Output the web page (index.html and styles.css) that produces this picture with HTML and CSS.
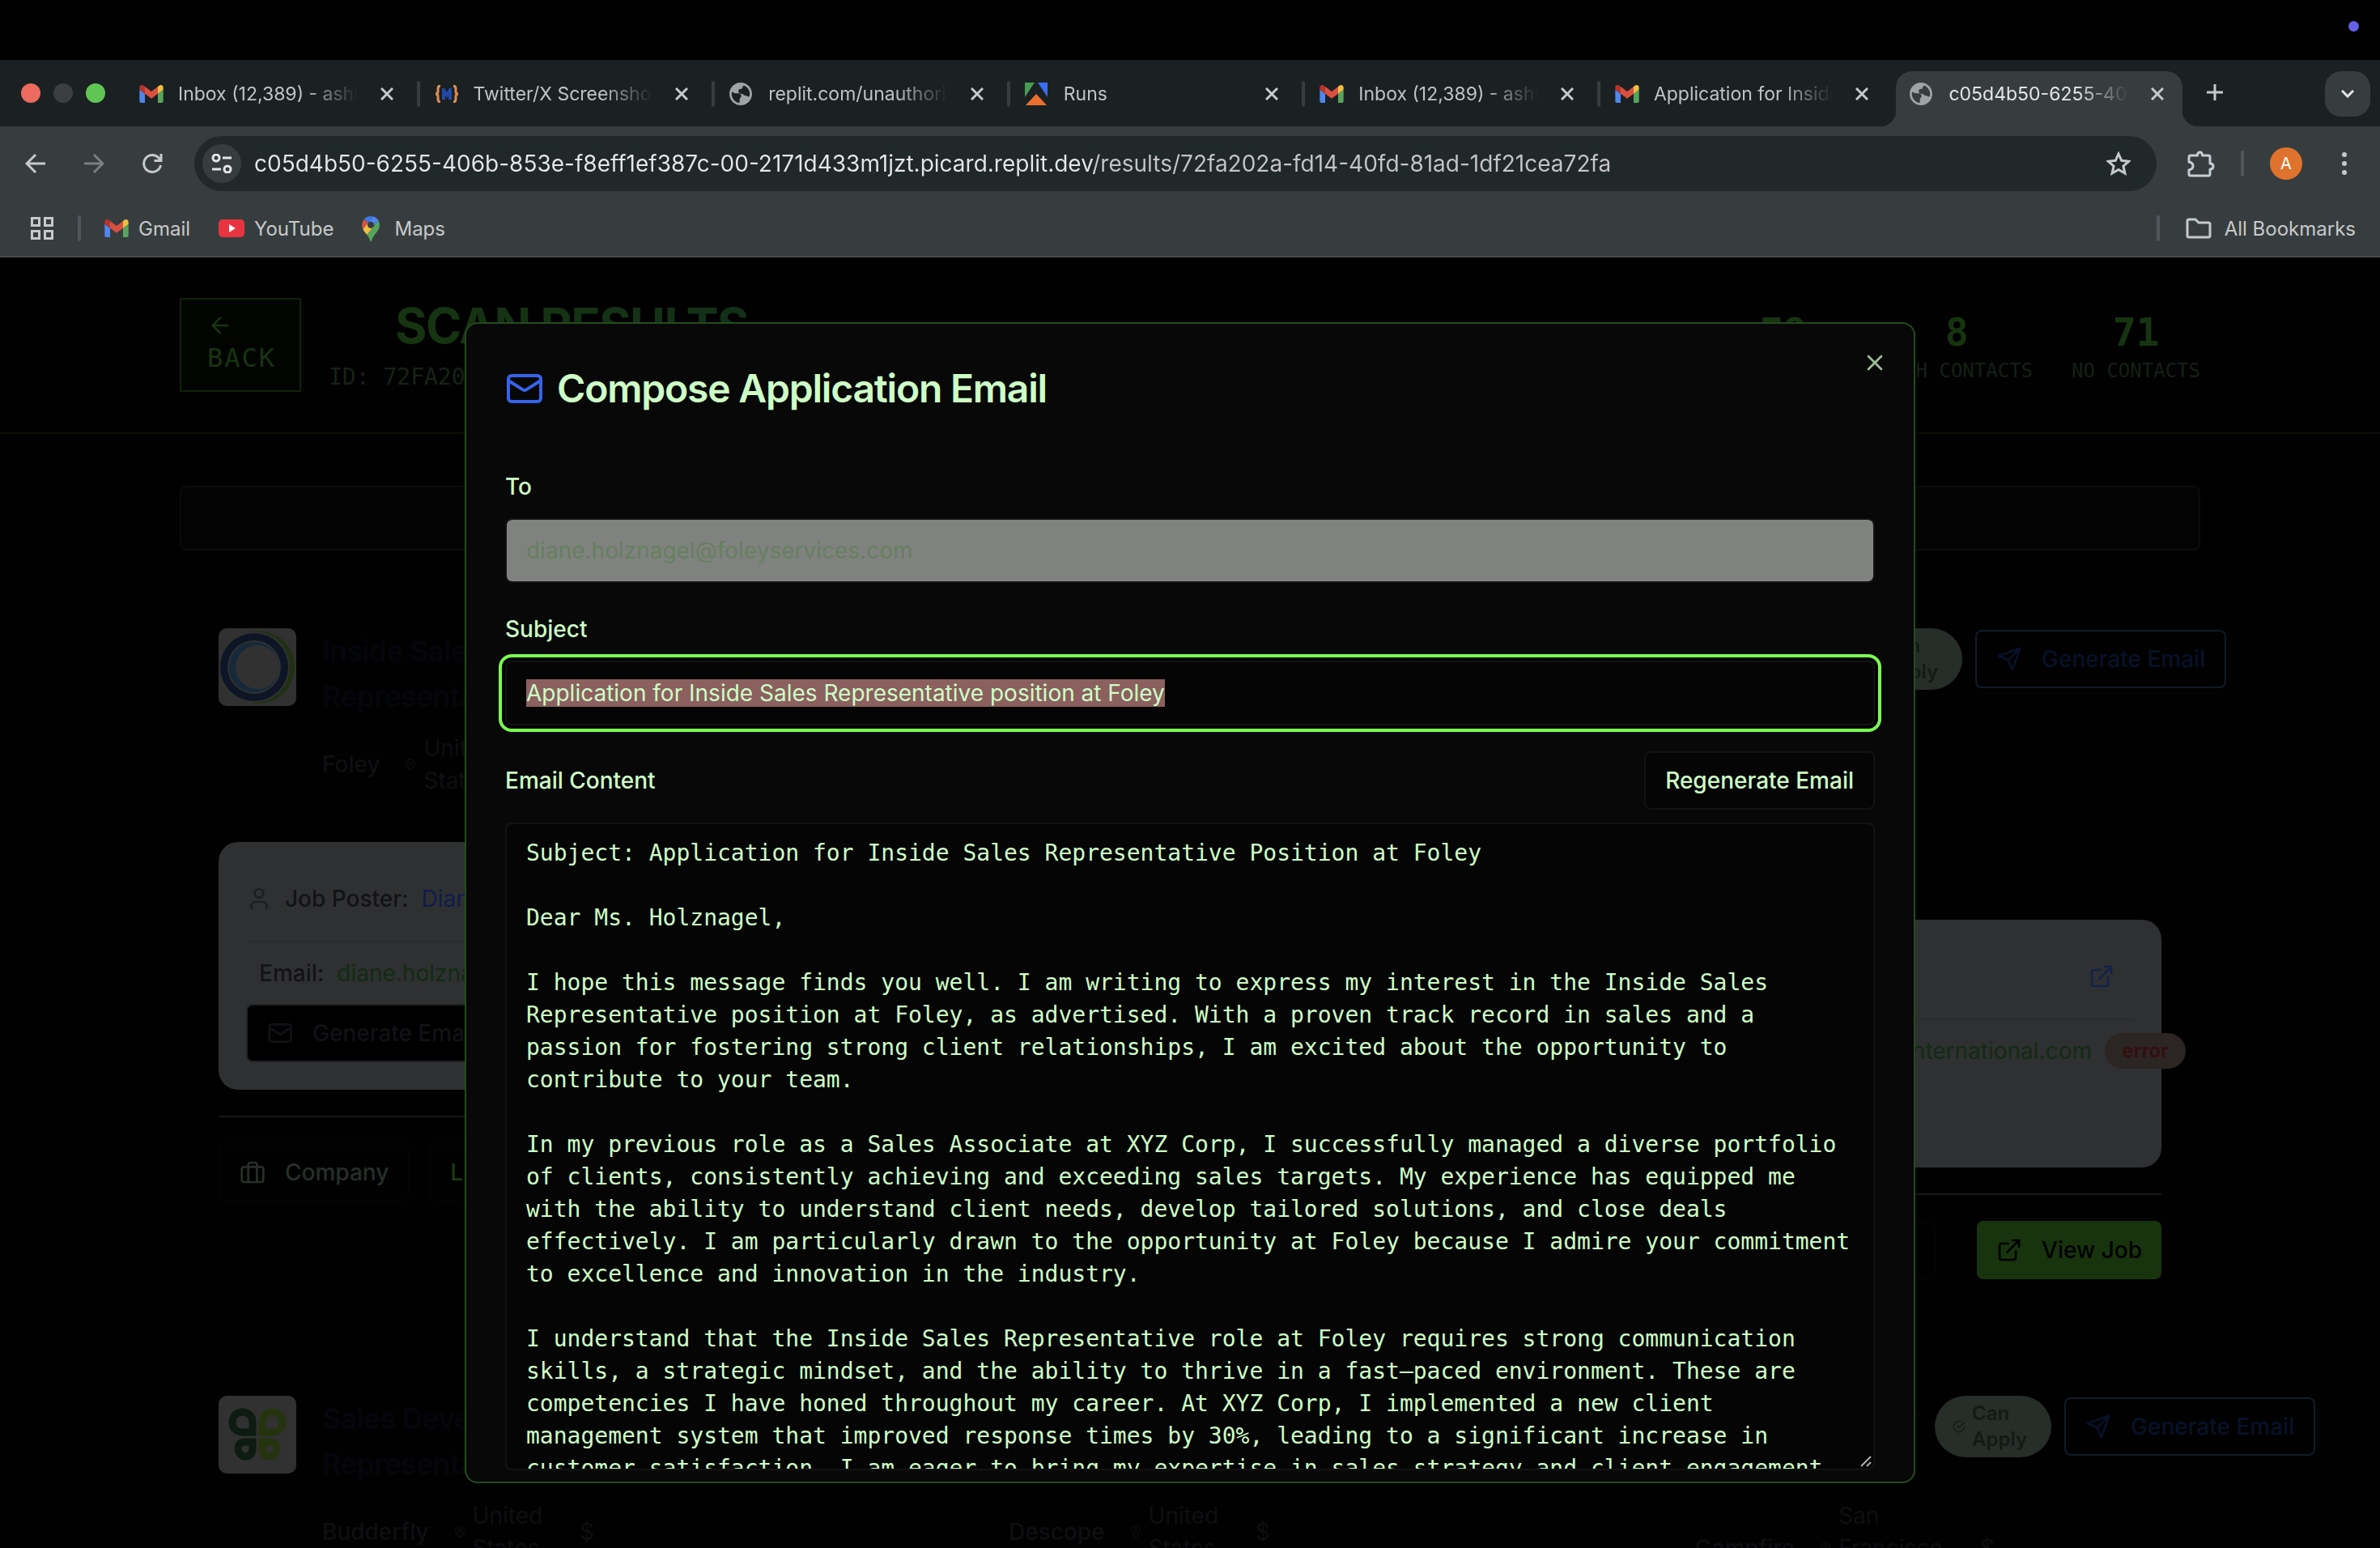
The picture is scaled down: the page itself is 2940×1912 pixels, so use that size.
FILE: index.html
```html
<!DOCTYPE html>
<html lang="en">
<head>
<meta charset="utf-8">
<title>Scan Results</title>
<link rel="stylesheet" href="styles.css">
</head>
<body>
<svg class="sprite" aria-hidden="true">
  <symbol id="gmail" viewBox="52 42 88 66"><path fill="#5186ec" d="M58 108h14V74L52 59v43c0 3.32 2.69 6 6 6"/><path fill="#57a55c" d="M120 108h14c3.32 0 6-2.69 6-6V59l-20 15"/><path fill="#f1be42" d="M120 48v26l20-15v-8c0-7.42-8.47-11.65-14.4-7.2"/><path fill="#d85040" d="M72 74V48l24 18 24-18v26L96 92"/><path fill="#b6342a" d="M52 51v8l20 15V48l-5.6-4.2c-5.94-4.45-14.4-.22-14.4 7.2"/></symbol>
  <symbol id="globe" viewBox="2 2 20 20"><path fill="#9ea3a6" d="M12 2C6.480 2 2 6.480 2 12s4.480 10 10 10 10-4.480 10-10S17.520 2 12 2zm-1 17.930c-3.950-.490-7-3.850-7-7.930 0-.9.1-1.500.210-1.790C5 10 6 11.500 7.500 11.500H10c1.500 0 2.500 1 2.500 2.500s-1.500 1.500-1.500 3v2.930zM19.500 14.500c-1.500 0-2-1-3.500-1s-1.500-1.500-3-1.500c-2 0-3-1-3-2.500S11 7.500 12.500 7.500 13 5 15 4.590C17.930 5.780 20 8.650 20 12c0 .9-.2 1.700-.5 2.500z"/></symbol>
  <symbol id="x" viewBox="0 0 24 24"><path d="M18 6 6 18M6 6l12 12"/></symbol>
  <symbol id="close" viewBox="0 0 16 16"><path d="M1 1l14 14M15 1 1 15"/></symbol>
  <symbol id="mail" viewBox="0 0 24 24"><rect x="2" y="4" width="20" height="16" rx="2"/><path d="m22 7-8.970 5.700a1.940 1.940 0 0 1-2.060 0L2 7"/></symbol>
  <symbol id="send" viewBox="0 0 24 24"><path d="m22 2-7 20-4-9-9-4ZM22 2 11 13"/></symbol>
  <symbol id="ext" viewBox="0 0 24 24"><path d="M15 3h6v6M10 14 21 3M18 13v6a2 2 0 0 1-2 2H5a2 2 0 0 1-2-2V8a2 2 0 0 1 2-2h6"/></symbol>
  <symbol id="pin" viewBox="0 0 24 24"><path d="M20 10c0 6-8 12-8 12s-8-6-8-12a8 8 0 0 1 16 0Z"/><circle cx="12" cy="10" r="3"/></symbol>
  <symbol id="user" viewBox="0 0 24 24"><path d="M19 21v-2a4 4 0 0 0-4-4H9a4 4 0 0 0-4 4v2"/><circle cx="12" cy="7" r="4"/></symbol>
  <symbol id="bag" viewBox="0 0 24 24"><rect x="2" y="7" width="20" height="14" rx="2"/><path d="M16 21V5a2 2 0 0 0-2-2h-4a2 2 0 0 0-2 2v16"/></symbol>
  <symbol id="check" viewBox="0 0 24 24"><path d="M22 11.080V12a10 10 0 1 1-5.930-9.140M22 4 12 14.010l-3-3"/></symbol>
  <symbol id="arrow" viewBox="0 0 24 24"><path d="m12 19-7-7 7-7M19 12H5"/></symbol>
</svg>

<div class="menubar"><span class="rec-dot"></span></div>

<div class="tabstrip">
  <div class="lights"><span class="light red"></span><span class="light gray"></span><span class="light green"></span></div>
  <div class="tabs">
    <div class="tab"><svg class="fav-mail"><use href="#gmail"/></svg><span class="tab-name">Inbox (12,389) - ashley</span><button class="tab-close" aria-label="Close tab"><svg><use href="#close"/></svg></button></div>
    <div class="tab"><svg class="fav-mail" viewBox="0 0 30 22"><path fill="none" stroke="#e08a52" stroke-width="3" d="M7 1Q4 1 4 5v3q0 3-3 3 3 0 3 3v3q0 4 3 4M23 1q3 0 3 4v3q0 3 3 3-3 0-3 3v3q0 4-3 4"/><path fill="#2349a8" d="M9 4h3l3 5 3-5h3v14h-4v-5l-2 3-2-3v5H9z"/></svg><span class="tab-name">Twitter/X Screenshots</span><button class="tab-close" aria-label="Close tab"><svg><use href="#close"/></svg></button></div>
    <div class="tab"><svg class="fav"><use href="#globe"/></svg><span class="tab-name">replit.com/unauthorized</span><button class="tab-close" aria-label="Close tab"><svg><use href="#close"/></svg></button></div>
    <div class="tab"><svg class="fav" viewBox="0 0 28 28"><path fill="#4a9a55" d="M0 0h12L0 18z"/><path fill="#3b6cf6" d="M16 0h12v18z"/><path fill="#ec6f2d" d="M14 14 27 28H1z"/></svg><span class="tab-name">Runs</span><button class="tab-close" aria-label="Close tab"><svg><use href="#close"/></svg></button></div>
    <div class="tab"><svg class="fav-mail"><use href="#gmail"/></svg><span class="tab-name">Inbox (12,389) - ashley</span><button class="tab-close" aria-label="Close tab"><svg><use href="#close"/></svg></button></div>
    <div class="tab"><svg class="fav-mail"><use href="#gmail"/></svg><span class="tab-name">Application for Inside Sales</span><button class="tab-close" aria-label="Close tab"><svg><use href="#close"/></svg></button></div>
    <div class="tab active"><svg class="fav"><use href="#globe"/></svg><span class="tab-name">c05d4b50-6255-406b</span><button class="tab-close" aria-label="Close tab"><svg><use href="#close"/></svg></button></div>
  </div>
  <button class="new-tab" aria-label="New tab"><svg viewBox="0 0 20 20"><path d="M10 0v20M0 10h20"/></svg></button>
  <button class="tab-search" aria-label="Search tabs"><svg viewBox="0 0 16 10"><path d="m1 1 7 7 7-7"/></svg></button>
</div>

<div class="toolbar">
  <div class="nav-row">
    <button class="nav-btn" aria-label="Back"><svg viewBox="0 0 26 26"><path d="M25 13H3M13 2 2 13l11 11"/></svg></button>
    <button class="nav-btn dim" aria-label="Forward"><svg viewBox="0 0 26 26"><path d="M1 13h22M13 2l11 11-11 11"/></svg></button>
    <button class="nav-btn" aria-label="Reload"><svg viewBox="0 0 26 26"><path d="M23.500 15A10.500 10.500 0 1 1 21 6l3 3M24 1v8.500h-8.500"/></svg></button>
    <div class="urlbar">
      <button class="site-info" aria-label="Site information"><svg viewBox="0 0 26 24"><circle cx="6" cy="5" r="4"/><path d="M14 5h11M1 19h11"/><circle cx="20" cy="19" r="4"/></svg></button>
      <input class="url" aria-label="Address" value="c05d4b50-6255-406b-853e-f8eff1ef387c-00-2171d433m1jzt.picard.replit.dev/results/72fa202a-fd14-40fd-81ad-1df21cea72fa">
      <button class="star" aria-label="Bookmark this page"><svg viewBox="0 0 30 30"><path d="m15 3 3.700 8.300 9 .9-6.800 6 2 8.800L15 22.400 7.100 27l2-8.800-6.800-6 9-.9z"/></svg></button>
    </div>
    <button class="ext-btn" aria-label="Extensions"><svg viewBox="0 0 34 34"><path d="M4 7h8.500q0-4 3-4t3 4H26q2 0 2 2v8q4 0 4 3.500T28 24v6q0 2-2 2H4q-2 0-2-2v-5q5-1 5-5t-5-5V9q0-2 2-2z"/></svg></button>
    <span class="bar"></span>
    <button class="avatar" aria-label="Profile">A</button>
    <button class="dots" aria-label="Menu"><svg viewBox="0 0 6 28"><circle cx="3" cy="3" r="3"/><circle cx="3" cy="14" r="3"/><circle cx="3" cy="25" r="3"/></svg></button>
  </div>
  <div class="marks-row">
    <button class="apps" aria-label="Apps"><svg viewBox="0 0 28 28"><path d="M1.500 1.500h9v9h-9zM17.500 1.500h9v9h-9zM1.500 17.500h9v9h-9zM17.500 17.500h9v9h-9z"/></svg></button>
    <span class="bar"></span>
    <a class="mark" href="#gmail"><svg class="fav-mail"><use href="#gmail"/></svg>Gmail</a>
    <a class="mark" href="#youtube"><svg class="yt" viewBox="0 0 32 22"><rect width="32" height="22" rx="5" fill="#ea3340"/><path fill="#fff" d="m13 6 8 5-8 5z"/></svg>YouTube</a>
    <a class="mark maps" href="#maps"><svg class="map-pin" viewBox="0 0 92 132"><path fill="#3c78e6" d="M60.200 2.200C55.800.8 51 0 46.100 0 32 0 19.300 6.400 10.800 16.500l21.800 18.300z"/><path fill="#d85040" d="M10.800 16.500C4.100 24.500 0 34.900 0 46.100c0 8.700 1.700 15.700 4.600 22l28-33.300z"/><path fill="#5186ec" d="M46.200 28.500c9.800 0 17.700 7.900 17.700 17.700 0 4.300-1.600 8.300-4.200 11.400 0 0 13.900-16.600 27.500-32.700-5.600-10.800-15.300-19-27-22.700L32.600 34.800c3.300-3.800 8.100-6.300 13.600-6.300"/><path fill="#f1be42" d="M46.200 63.800c-9.800 0-17.700-7.900-17.700-17.700 0-4.300 1.500-8.300 4.100-11.300l-28 33.300c4.800 10.600 12.800 19.200 21 29.900l34.100-40.500c-3.300 3.900-8.100 6.300-13.500 6.300"/><path fill="#57a55c" d="M59.100 109.200c15.400-24.100 33.300-35 33.300-63 0-7.700-1.900-14.900-5.200-21.300L25.600 98c2.600 3.400 5.300 7.300 7.900 11.300 9.400 14.500 6.800 23.100 12.800 23.100s3.400-8.700 12.800-23.200"/></svg>Maps</a>
    <span class="bar push"></span>
    <button class="mark all"><svg class="folder" viewBox="0 0 32 26"><path d="M2 4q0-2 2-2h8l4 4h12q2 0 2 2v14q0 2-2 2H4q-2 0-2-2z"/></svg>All Bookmarks</button>
  </div>
</div>

<div class="page">
  <header class="header">
    <div class="wrap header-row">
      <button class="back"><svg class="ic"><use href="#arrow"/></svg>BACK</button>
      <div class="heading">
        <h1>SCAN RESULTS</h1>
        <p>ID: 72FA202A-FD14-40FD-81AD-1DF21CEA72FA</p>
      </div>
      <dl class="stats">
        <div><dd>79</dd><dt>TOTAL JOBS</dt></div>
        <div><dd>8</dd><dt>WITH CONTACTS</dt></div>
        <div><dd>71</dd><dt>NO CONTACTS</dt></div>
      </dl>
    </div>
  </header>

  <main class="wrap">
    <div class="filter"></div>
    <div class="grid">
      <article class="job">
        <div class="job-head">
          <svg class="logo" viewBox="0 0 96 96"><rect width="96" height="96" fill="#313131"/><circle cx="49" cy="48" r="45" fill="#1f3013"/><circle cx="44" cy="48" r="44" fill="#313131"/><circle cx="44" cy="48" r="42" fill="#0d1526"/><circle cx="44" cy="48" r="33" fill="#313131"/><circle cx="44" cy="48" r="31" fill="#16293a"/><circle cx="48" cy="48" r="27" fill="#313131"/></svg>
          <div class="job-main">
            <h2>Inside Sales<br>Representative</h2>
            <div class="meta"><strong>Foley</strong><span class="place"><svg class="ic-s"><use href="#pin"/></svg><span>United<br>States</span></span></div>
          </div>
        </div>
        <section class="contact">
          <div class="poster"><svg class="ic"><use href="#user"/></svg><span>Job Poster:</span><a href="#poster">Diane Holznagel</a></div>
          <div class="email"><span>Email:</span><a href="#email">diane.holznagel@foleyservices.com</a></div>
          <button class="btn btn-dark"><svg class="ic"><use href="#mail"/></svg>Generate Email</button>
        </section>
        <div class="job-foot"><button class="btn btn-faint"><svg class="ic"><use href="#bag"/></svg>Company</button><button class="btn btn-faint lime">LinkedIn</button></div>
      </article>

      <article class="job"></article>

      <article class="job">
        <div class="job-head tall">
          <span class="logo"></span>
          <div class="job-main narrow"></div>
          <div class="actions"><span class="pill"><svg class="ic-s"><use href="#check"/></svg><span>Can<br>Apply</span></span><button class="btn btn-blue"><svg class="ic"><use href="#send"/></svg>Generate Email</button></div>
        </div>
        <section class="contact">
          <div class="poster end"><svg class="ic link"><use href="#ext"/></svg></div>
          <div class="email end"><a href="#email">hr@international.com</a><span class="error">error</span></div>
        </section>
        <div class="job-foot"><button class="btn btn-faint"><svg class="ic"><use href="#bag"/></svg>Company</button><button class="btn btn-faint lime">LinkedIn</button><button class="btn btn-green"><svg class="ic"><use href="#ext"/></svg>View Job</button></div>
      </article>

      <article class="job">
        <div class="job-head">
          <svg class="logo" viewBox="0 0 96 96"><rect width="96" height="96" fill="#313131"/><g fill="none" stroke-width="9"><path stroke="#0d1b12" d="M42 45H30C21 45 17 39 17 33s4-13 12-13 13 5 13 13z"/><path stroke="#25330f" d="M54 45h12c9 0 13-6 13-12s-4-13-12-13-13 5-13 13z"/><path stroke="#0d1b12" d="M42 57H32c-6 0-8 4-8 8s3 10 9 10 9-4 9-10z"/><path stroke="#25330f" d="M54 57h10c6 0 8 4 8 8s-3 10-9 10-9-4-9-10z"/></g></svg>
          <div class="job-main">
            <h2>Sales Development<br>Representative</h2>
            <div class="meta"><strong>Budderfly</strong><span class="place"><svg class="ic-s"><use href="#pin"/></svg><span>United<br>States</span></span><span class="pay">$</span></div>
          </div>
        </div>
      </article>
      <article class="job">
        <div class="job-head">
          <span class="logo"></span>
          <div class="job-main">
            <h2><br><br></h2>
            <div class="meta"><strong>Descope</strong><span class="place"><svg class="ic-s"><use href="#pin"/></svg><span>United<br>States</span></span><span class="pay">$</span></div>
          </div>
        </div>
      </article>
      <article class="job">
        <div class="job-head">
          <span class="logo"></span>
          <div class="job-main mid">
            <h2>Growth Engineer</h2>
            <div class="meta"><strong>Campfire</strong><span class="place"><svg class="ic-s"><use href="#pin"/></svg><span>San<br>Francisco<br>Bay Area</span></span><span class="pay">$</span></div>
          </div>
          <div class="actions"><span class="pill"><svg class="ic-s"><use href="#check"/></svg><span>Can<br>Apply</span></span><button class="btn btn-blue"><svg class="ic"><use href="#send"/></svg>Generate Email</button></div>
        </div>
      </article>
    </div>
  </main>

  <div class="modal" role="dialog" aria-labelledby="dlg-title">
    <button class="modal-close" aria-label="Close"><svg><use href="#x"/></svg></button>
    <h2 class="modal-title" id="dlg-title"><svg><use href="#mail"/></svg>Compose Application Email</h2>
    <form class="form">
      <div class="field">
        <label for="to">To</label>
        <input class="box to" id="to" value="diane.holznagel@foleyservices.com" disabled>
      </div>
      <div class="field">
        <label for="subject">Subject</label>
        <input class="box subject" id="subject" value="Application for Inside Sales Representative position at Foley">
      </div>
      <div class="field">
        <div class="field-head"><label for="content">Email Content</label><button type="button" class="regen">Regenerate Email</button></div>
        <div class="area">
<textarea class="box content" id="content" spellcheck="false">Subject: Application for Inside Sales Representative Position at Foley

Dear Ms. Holznagel,

I hope this message finds you well. I am writing to express my interest in the Inside Sales Representative position at Foley, as advertised. With a proven track record in sales and a passion for fostering strong client relationships, I am excited about the opportunity to contribute to your team.

In my previous role as a Sales Associate at XYZ Corp, I successfully managed a diverse portfolio of clients, consistently achieving and exceeding sales targets. My experience has equipped me with the ability to understand client needs, develop tailored solutions, and close deals effectively. I am particularly drawn to the opportunity at Foley because I admire your commitment to excellence and innovation in the industry.

I understand that the Inside Sales Representative role at Foley requires strong communication skills, a strategic mindset, and the ability to thrive in a fast–paced environment. These are competencies I have honed throughout my career. At XYZ Corp, I implemented a new client management system that improved response times by 30%, leading to a significant increase in customer satisfaction. I am eager to bring my expertise in sales strategy and client engagement</textarea>
          <svg class="grip" viewBox="0 0 14 14"><path d="M1 13 13 1M8 13l5-5"/></svg>
        </div>
      </div>
    </form>
  </div>
</div>
<script src="app.js"></script>
</body>
</html>
```
FILE: styles.css
```css
* { box-sizing: border-box; margin: 0; }
:root {
  --sans: Inter, "Liberation Sans", sans-serif;
  --mono: "DejaVu Sans Mono", "Liberation Mono", monospace;
}
html, body { height: 100%; }
body { display: flex; flex-direction: column; background: #000; font-family: var(--sans); overflow: hidden; }
button, input, textarea { font: inherit; color: inherit; border: 0; background: none; padding: 0; outline: 0; }
a { color: inherit; text-decoration: none; }
svg { display: block; flex: none; }
.sprite { position: absolute; width: 0; height: 0; }

/* window chrome */
.menubar { height: 74px; display: flex; justify-content: flex-end; padding: 26px 26px 0; }
.rec-dot { width: 13px; height: 13px; border-radius: 50%; background: #6560e8; }

.tabstrip { height: 82px; background: #1b2123; display: flex; align-items: flex-start; color: #bfc3c5; font-size: 23px; }
.lights { display: flex; gap: 16px; padding: 29px 20px 0 26px; }
.light { width: 24px; height: 24px; border-radius: 50%; }
.red { background: #ed6a5e; }
.gray { background: #3b3f41; }
.green { background: #61c554; }
.tabs { display: flex; flex: 0 1 2552px; min-width: 0; padding-top: 14px; }
.tab { flex: 1 1 0; min-width: 0; height: 68px; display: flex; align-items: center; padding: 0 29px 12px 22px; position: relative; }
.tab + .tab:not(.active)::before { content: ""; position: absolute; left: 0; top: 12px; width: 4px; height: 32px; border-radius: 2px; background: #373d3f; }
.fav-mail { width: 30px; height: 22px; }
.fav { width: 28px; height: 28px; margin-right: 2px; }
.tab-name { flex: 1; margin: 0 28px 0 18px; white-space: nowrap; overflow: hidden; -webkit-mask-image: linear-gradient(90deg, #000 calc(100% - 64px), transparent); mask-image: linear-gradient(90deg, #000 calc(100% - 64px), transparent); }
.tab-close svg { width: 16px; height: 16px; stroke: #c6cacb; stroke-width: 3; }
.tab.active { color: #e3e5e5; }
.tab.active::before { content: ""; position: absolute; z-index: 0; inset: 0 6px 0 5px; background: #373d3f; border-radius: 20px 20px 0 0; }
.tab.active::after { content: ""; position: absolute; left: -15px; right: -14px; bottom: 0; height: 20px; background: radial-gradient(circle at 0 0, transparent 20px, #373d3f 21px) left / 20px 20px no-repeat, radial-gradient(circle at 100% 0, transparent 20px, #373d3f 21px) right / 20px 20px no-repeat; }
.tab.active > * { position: relative; z-index: 1; }
.new-tab { margin: 30px 0 0 24px; }
.new-tab svg { width: 20px; height: 20px; stroke: #c6cacb; stroke-width: 3; }
.tab-search { width: 56px; height: 56px; margin: 14px 12px 0 auto; border-radius: 20px; background: #373d3f; display: grid; place-items: center; }
.tab-search svg { width: 16px; height: 10px; fill: none; stroke: #e3e5e5; stroke-width: 3; }

.toolbar { background: #373d3f; border-bottom: 2px solid #484b4b; color: #c7c9c9; height: 162px; }
.nav-row { height: 92px; display: flex; align-items: center; padding: 0 41px 0 31px; }
.nav-btn { width: 26px; margin-right: 46px; }
.nav-btn svg { width: 26px; height: 26px; fill: none; stroke: #c7c9c9; stroke-width: 3; }
.nav-btn.dim svg { stroke: #7b7f80; }
.urlbar { flex: 1; height: 68px; border-radius: 34px; background: #21282a; display: flex; align-items: center; padding: 0 32px 0 10px; margin-left: -7px; }
.site-info { width: 48px; height: 48px; border-radius: 50%; background: #373d3f; display: grid; place-items: center; }
.site-info svg { width: 26px; height: 24px; fill: none; stroke: #e3e5e5; stroke-width: 3; }
.url { flex: 1; min-width: 0; margin-left: 16px; font-size: 28px; height: 40px; color: transparent; background: linear-gradient(90deg, #e6e8e8 1038px, #c4c6c6 1038px); -webkit-background-clip: text; background-clip: text; }
.star svg { width: 30px; height: 30px; fill: none; stroke: #c7c9c9; stroke-width: 3; }
.ext-btn { margin-left: 38px; }
.ext-btn svg { width: 34px; height: 34px; fill: none; stroke: #c3ced0; stroke-width: 3; stroke-linejoin: round; }
.bar { width: 4px; height: 32px; border-radius: 2px; background: #50575a; }
.nav-row .bar { margin: 0 32px; }
.avatar { width: 40px; height: 40px; border-radius: 50%; background: #df732d; color: #fff; font-size: 20px; }
.dots { margin-left: 49px; }
.dots svg { width: 6px; height: 28px; fill: #c7c9c9; }
.marks-row { display: flex; align-items: center; height: 68px; padding: 0 30px 0 38px; font-size: 24px; }
.apps svg { width: 28px; height: 28px; fill: none; stroke: #c7c9c9; stroke-width: 3; }
.marks-row .bar { margin: 0 29px 0 30px; }
.marks-row .bar.push { margin: 0 32px 0 auto; }
.mark { display: flex; align-items: center; gap: 12px; margin-right: 35px; }
.mark.maps { gap: 18px; }
.mark.all { gap: 16px; margin-right: 0; }
.yt { width: 32px; height: 22px; }
.map-pin { width: 22px; height: 31px; }
.folder { width: 32px; height: 26px; fill: none; stroke: #c7c9c9; stroke-width: 3; }

/* results page, dimmed by the open dialog */
.page { flex: 1; min-height: 0; position: relative; overflow: hidden; background: #010101; font-size: 28px; line-height: 40px; }
.wrap { max-width: 2560px; margin: 0 auto; padding: 0 32px; }
.header { border-bottom: 2px solid #081006; padding: 50px 0; }
.header-row { display: flex; align-items: center; height: 116px; }
.back { display: flex; flex-direction: column; align-items: flex-start; width: 150px; height: 116px; border: 2px solid #0f2409; padding: 16px 0 0 32px; font: 32px/48px var(--mono); letter-spacing: 2px; color: #173410; background: #020402; }
.ic { width: 32px; height: 32px; fill: none; stroke: currentColor; stroke-width: 2; stroke-linecap: round; stroke-linejoin: round; }
.ic-s { width: 16px; height: 16px; fill: none; stroke: currentColor; stroke-width: 2; }
.heading { width: 600px; margin-left: 34px; }
.heading h1 { font-size: 60px; line-height: 72px; margin-bottom: 8px; letter-spacing: -0.025em; text-align: center; white-space: nowrap; color: transparent; background: linear-gradient(90deg, #17350f, #12301a); -webkit-background-clip: text; background-clip: text; }
.heading p { font-family: var(--mono); color: #182218; white-space: nowrap; overflow: hidden; }
.stats { display: flex; gap: 48px; margin-left: auto; font-family: var(--mono); text-align: center; }
.stats div { display: flex; flex-direction: column; }
.stats dd { font-size: 48px; line-height: 64px; font-weight: 700; color: #173410; }
.stats dt { font-size: 24px; line-height: 32px; color: #152015; }
.filter { height: 80px; margin: 64px 0 48px; border: 2px solid #090d06; border-radius: 8px; background: #030303; box-shadow: 0 0 24px #030303; }
.grid { display: grid; grid-template-columns: repeat(3, minmax(0, 1fr)); gap: 48px; grid-auto-rows: 900px; }
.job { padding: 48px; border-radius: 16px; }
.job-head { display: flex; min-height: 208px; }
.job-head.tall { min-height: 304px; }
.logo { width: 96px; height: 96px; border-radius: 10px; flex: none; }
.job-main { margin-left: 32px; flex: none; }
.job-main.narrow { width: 170px; }
.job-main.mid { width: 280px; }
.job-main h2 { font-size: 36px; line-height: 56px; font-weight: 600; letter-spacing: -0.025em; margin-bottom: 16px; height: 112px; white-space: nowrap; color: #05060b; }
.meta { display: flex; align-items: center; gap: 30px; color: #0e0f11; }
.meta strong { font-weight: 500; }
.place { display: flex; align-items: center; gap: 8px; }
.pay { margin-left: 16px; }
.actions { display: flex; align-items: center; gap: 16px; margin-left: 16px; height: 76px; flex: none; }
.pill { display: flex; align-items: center; gap: 8px; width: 144px; height: 76px; padding-left: 22px; border-radius: 38px; background: #272d29; color: #121b13; font-size: 24px; line-height: 32px; font-weight: 600; }
.btn { display: inline-flex; align-items: center; gap: 24px; height: 72px; padding: 0 24px; border: 2px solid transparent; border-radius: 8px; font-weight: 500; white-space: nowrap; }
.btn-blue { border-color: #111b29; color: #081129; }
.btn-dark { background: #000; border-color: #202224; color: #111215; width: 100%; }
.btn-faint { border-color: #030403; color: #272f28; }
.btn-faint.lime { color: #1b3b0e; }
.btn-green { background: #18340e; color: #000; margin-left: auto; border: 0; }
.contact { margin-top: 56px; height: 306px; padding: 34px; border-radius: 24px; background: #2f3032; color: #121315; font-weight: 500; }
.poster { display: flex; align-items: center; height: 72px; margin-bottom: 16px; gap: 16px; }
.poster .ic { color: #1d1e20; }
.poster a { color: #101c4a; font-weight: 400; }
.email { display: flex; align-items: center; height: 78px; padding-left: 16px; border-top: 2px solid #2b2c2f; gap: 16px; white-space: nowrap; }
.email a { color: #122b12; font-weight: 400; }
.end { justify-content: flex-end; }
.poster .link { color: #14224a; margin-right: 24px; }
.error { width: 100px; height: 44px; margin-right: -64px; border-radius: 22px; background: #2b2523; color: #340d0d; font-size: 24px; line-height: 44px; font-weight: 600; text-align: center; flex: none; }
.job-foot { display: flex; gap: 24px; margin-top: 32px; padding-top: 32px; border-top: 2px solid #181818; }

/* dialog */
.modal { position: absolute; top: 80px; bottom: 80px; left: 50%; width: 1792px; max-width: 100%; margin-left: -896px; padding: 48px; border: 2px solid #254b1e; border-radius: 16px; background: #080808; color: #cdffc6; overflow: hidden; }
.modal-close { position: absolute; top: 32px; right: 32px; }
.modal-close svg { width: 32px; height: 32px; stroke: #a0bd9c; stroke-width: 2; stroke-linecap: round; }
.modal-title { display: flex; align-items: center; gap: 16px; height: 64px; font-size: 48px; font-weight: 600; letter-spacing: -0.025em; }
.modal-title svg { width: 48px; height: 48px; fill: none; stroke: #3763e8; stroke-width: 2; stroke-linejoin: round; }
.form { display: flex; flex-direction: column; gap: 32px; margin-top: 64px; }
.field { display: flex; flex-direction: column; gap: 16px; }
.field label { font-weight: 500; line-height: 48px; }
.field > label { padding-top: 2px; line-height: 46px; }
.box { display: block; width: 100%; height: 80px; padding: 0 24px; border: 2px solid #121312; border-radius: 8px; background: #050505; background-clip: padding-box; }
.to { background-color: #808280; color: #66805f; -webkit-text-fill-color: #66805f; }
.subject { box-shadow: 0 0 0 4px #030303, 0 0 0 8px #7aff4d; caret-color: transparent; }
.subject::selection { background: rgba(141, 97, 96, .99); color: #cdffc6; }
.field-head { display: flex; justify-content: space-between; align-items: center; }
.regen { height: 72px; padding: 0 24px; border: 2px solid #121312; border-radius: 8px; font-weight: 500; background: #050505; }
.area { position: relative; }
.content { height: 800px; padding: 16px 24px; font-family: var(--mono); line-height: 40px; resize: none; overflow: hidden; }
.grip { position: absolute; right: 4px; bottom: 4px; width: 14px; height: 14px; stroke: #b0b0b0; stroke-width: 2; }
```
FILE: app.js
```js
const subject = document.getElementById("subject");
subject.focus();
subject.select();
```
